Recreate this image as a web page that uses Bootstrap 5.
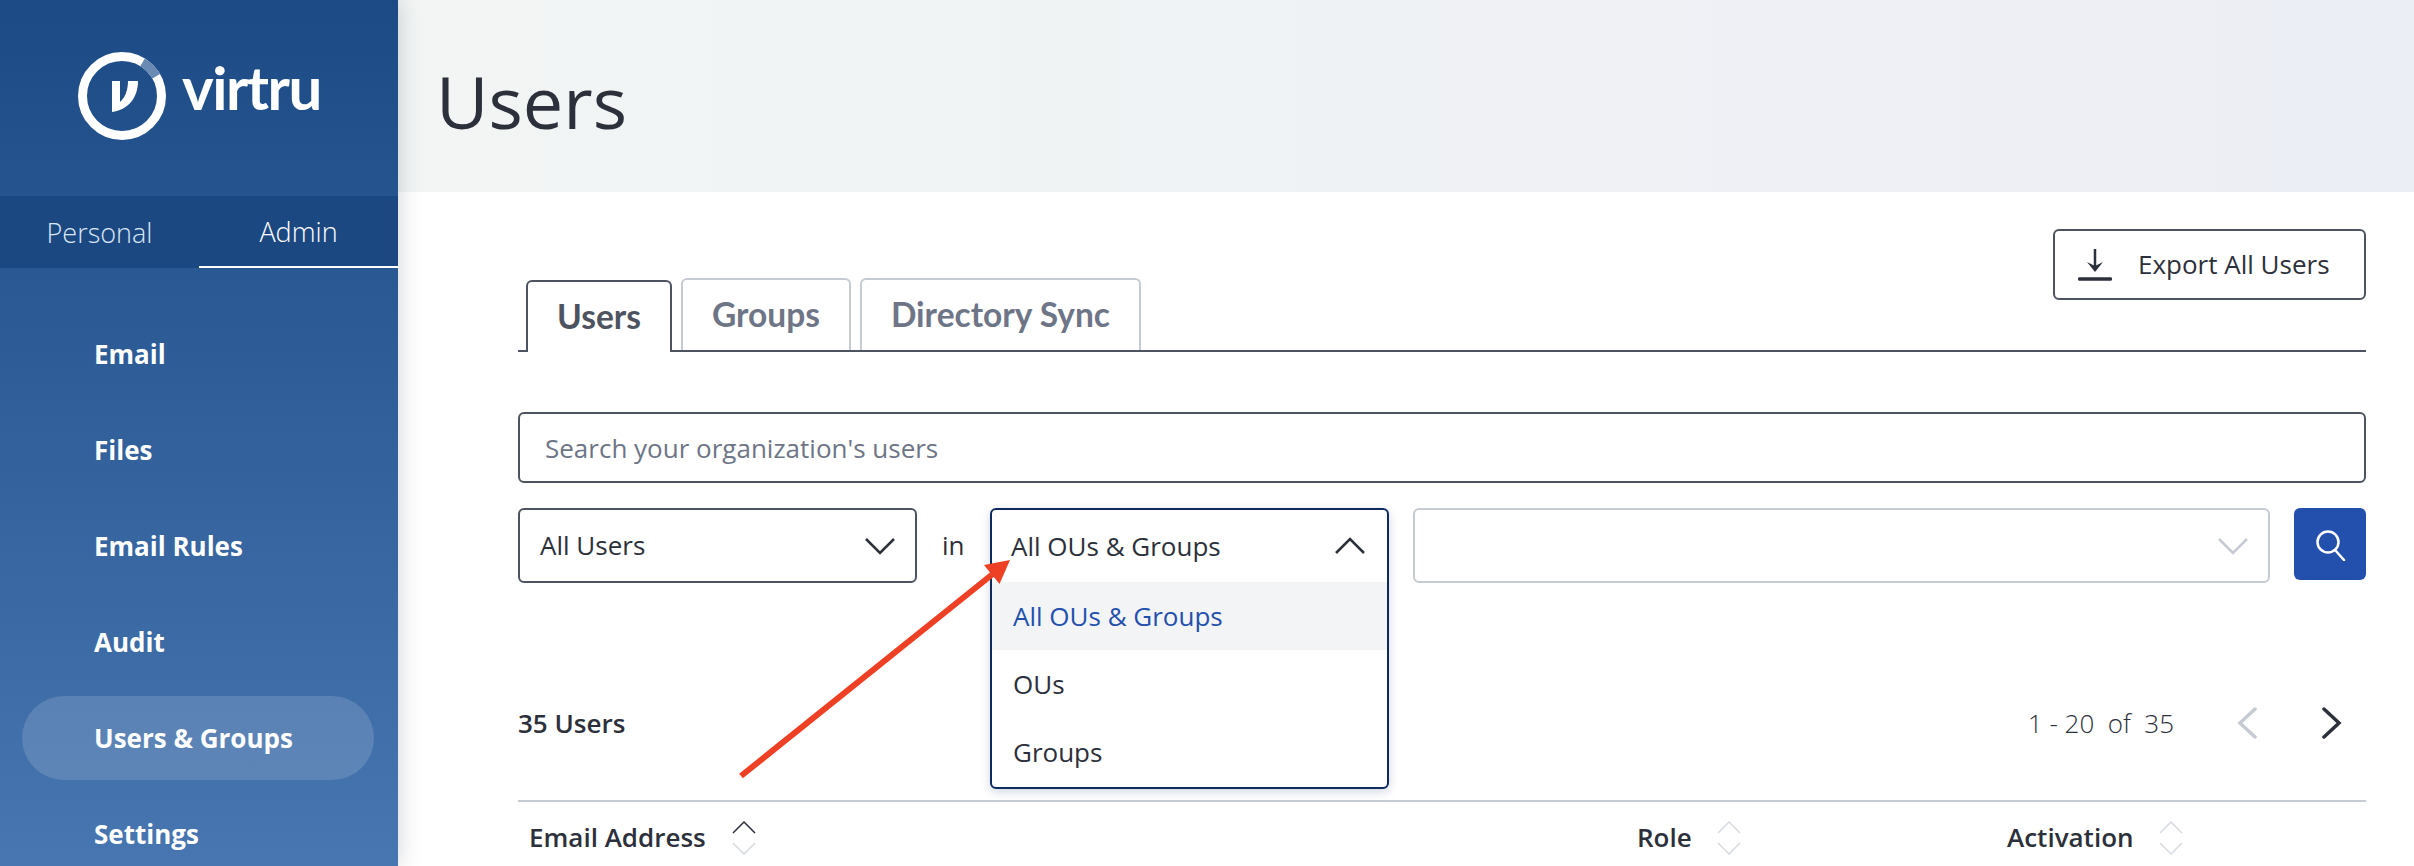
<!DOCTYPE html>
<html lang="en">
<head>
<meta charset="utf-8">
<title>Virtru - Users</title>
<link rel="stylesheet" href="https://cdn.jsdelivr.net/npm/bootstrap@5.3.0/dist/css/bootstrap.min.css">
<style>
html,body{height:866px;overflow:hidden}
body{font-family:"Open Sans","Liberation Sans",sans-serif;font-size:26px;color:#2c303b;background:#fff}
.side-panel{width:398px;height:866px;flex:none;background:linear-gradient(180deg,#1b4a84 0,#4876b0 100%);box-shadow:0 0 22px rgba(40,50,70,.22);position:relative;z-index:2}
.side-panel>*{flex:none}
.brand-area{height:196px;padding:52px 0 0 78px}
.brand-word{font-family:Lato,sans-serif;font-weight:700;font-size:60px;line-height:60px;letter-spacing:-1.5px;color:#fff;margin-left:12px;margin-top:5px}
.mode-switch{height:72px;background:#1c4882}
.mode-switch a{flex:1 1 0;display:flex;align-items:center;justify-content:center;font-weight:300;font-size:27px;color:#dbe6f5;text-decoration:none;height:72px;padding-top:2px}
.mode-switch a.on{color:#fff;border-bottom:2px solid #fff}
.side-links{padding:44px 24px 0 22px;gap:12px}
.side-links a{height:84px;flex:none;display:flex;align-items:center;padding-left:72px;color:#fff;font-weight:700;text-decoration:none;border-radius:42px}
.side-links a.on{background:rgba(255,255,255,.14)}
.page-head{height:192px;background:linear-gradient(90deg,#f2f5f4 0,#eceef5 100%);padding-left:38px;display:flex;align-items:center}
.page-head h1{font-size:72px;font-weight:400;margin:10px 0 0;line-height:1;color:#2c303b}
.page-body{padding:37px 48px 0 120px}
.tab-strip{height:123px;border-bottom:2px solid #4d5360;padding-left:8px;gap:9px;align-items:flex-end;flex-wrap:nowrap}
.tab-strip .nav-link{font-family:Lato,sans-serif;font-weight:700;font-size:33.5px;height:72px;padding:0 29px 1px;display:flex;align-items:center;color:#6d7587;border:2px solid #c5cad3;border-bottom:0;border-radius:6px 6px 0 0;margin-bottom:0;background:#fff}
.tab-strip .nav-link.active{color:#4d5360;border-color:#4d5360;position:relative;top:2px;margin-top:-2px}
.export-btn{align-self:flex-start;width:313px;height:71px;border:2px solid #4d5360;border-radius:6px;background:#fff;font-size:26px;color:#2c303b;display:flex;align-items:center;gap:26px;padding:0 0 0 23px}
.search-box.form-control{margin-top:60px;height:71px;border:2px solid #4d5360;border-radius:6px;font-size:26px;padding:0 25px;color:#2c303b}
.search-box::placeholder{color:#6d7587}
.filter-row{margin-top:25px;height:75px}
.pick-box{height:75px;border:2px solid #4d5360;border-radius:6px;display:flex;align-items:center;justify-content:space-between;padding:0 19px 0 20px;background:#fff}
.pick-users{width:399px;flex:none}
.in-word{width:73px;flex:none;padding-left:25px}
.pick-slot{width:399px;flex:none;position:relative;height:75px}
.pick-open{position:absolute;top:0;left:0;width:399px;height:281px;z-index:3;background:#fff;border:2px solid #0e2a5e;border-radius:6px;box-shadow:0 3px 10px rgba(20,50,110,.2);overflow:hidden}
.pick-open .head-line{height:72px;display:flex;align-items:center;justify-content:space-between;padding:0 21px 0 19px}
.pick-open .dropdown-item{height:68px;display:flex;align-items:center;padding:0 21px;font-size:26px;color:#2c303b}
.pick-open .dropdown-item.active{background:#f3f4f6;color:#2450ad}
.pick-empty{margin-left:24px;flex:1 1 auto;border-color:#c5cad3}
.go-btn{width:72px;height:72px;flex:none;margin-left:24px;background:#2450ad;border:0;border-radius:6px;padding:0;display:flex;align-items:center;justify-content:center}
.count-row{margin-top:105px;height:70px;margin-bottom:42px}
.count-label{font-weight:600}
.range-label{font-weight:300;margin-right:63px}
.pager{gap:65px}
.user-table{table-layout:fixed;width:1848px;margin:0;border-top:2px solid #c5cad3}
.user-table th{font-weight:600;font-size:26px;color:#2c303b;border:0;padding:19px 11px 15px;line-height:32px;vertical-align:middle;background:transparent}
.user-table .c-one{width:1108px}
.user-table .c-two{width:370px}
.sort-mark{margin-left:19px;margin-top:-4px;vertical-align:middle}
.mark-layer{position:absolute;top:0;left:0;pointer-events:none;z-index:5}
</style>
</head>
<body>
<div class="d-flex">
  <aside class="side-panel d-flex flex-column">
    <div class="brand-area d-flex align-items-start">
      <svg width="92" height="92" viewBox="0 0 92 92" aria-label="Virtru logo">
        <circle cx="44" cy="44" r="39.5" fill="none" stroke="#fff" stroke-width="9"/>
        <path d="M64.5 10.3A39.5 39.5 0 0 1 78.2 24.2" fill="none" stroke="#6a8ab4" stroke-width="9"/>
        <path d="M34 29H42V50C47 46 50 38 50 29H60C60 46 50 58 34 60Z" fill="#fff"/>
      </svg>
      <span class="brand-word">virtru</span>
    </div>
    <nav class="mode-switch d-flex">
      <a href="#">Personal</a>
      <a href="#" class="on">Admin</a>
    </nav>
    <nav class="side-links d-flex flex-column">
      <a href="#">Email</a>
      <a href="#">Files</a>
      <a href="#">Email Rules</a>
      <a href="#">Audit</a>
      <a href="#" class="on">Users &amp; Groups</a>
      <a href="#">Settings</a>
    </nav>
  </aside>
  <main class="flex-grow-1">
    <header class="page-head"><h1>Users</h1></header>
    <div class="page-body">
      <ul class="nav nav-tabs tab-strip">
        <li class="nav-item"><a class="nav-link active" href="#">Users</a></li>
        <li class="nav-item"><a class="nav-link" href="#">Groups</a></li>
        <li class="nav-item"><a class="nav-link" href="#">Directory Sync</a></li>
        <li class="ms-auto align-self-start">
          <button class="export-btn" type="button">
            <svg width="34" height="34" viewBox="0 0 34 34"><path d="M17 1V18" stroke="#2c303b" stroke-width="2.500"/><path d="M9 14L17 24L25 14L17 18Z" fill="#2c303b"/><path d="M1.500 31H32.500" stroke="#2c303b" stroke-width="3.500" stroke-linecap="round"/></svg>
            Export All Users
          </button>
        </li>
      </ul>
      <input class="form-control search-box" type="text" placeholder="Search your organization's users">
      <div class="filter-row d-flex align-items-start">
        <div class="pick-box pick-users">
          <span>All Users</span>
          <svg width="32" height="18" viewBox="0 0 32 18"><path d="M2 2L16 16L30 2" fill="none" stroke="#2c303b" stroke-width="2.500"/></svg>
        </div>
        <div class="in-word d-flex align-items-center h-100">in</div>
        <div class="pick-slot">
          <div class="pick-open">
            <div class="head-line">
              <span>All OUs &amp; Groups</span>
              <svg width="32" height="18" viewBox="0 0 32 18"><path d="M2 16L16 2L30 16" fill="none" stroke="#2c303b" stroke-width="2.500"/></svg>
            </div>
            <a class="dropdown-item active" href="#">All OUs &amp; Groups</a>
            <a class="dropdown-item" href="#">OUs</a>
            <a class="dropdown-item" href="#">Groups</a>
          </div>
        </div>
        <div class="pick-box pick-empty">
          <span></span>
          <svg width="32" height="18" viewBox="0 0 32 18"><path d="M2 2L16 16L30 2" fill="none" stroke="#c5cad3" stroke-width="2.500"/></svg>
        </div>
        <button class="go-btn" type="button" aria-label="Search">
          <svg width="32" height="34" viewBox="0 0 32 34"><circle cx="14" cy="15" r="10.500" fill="none" stroke="#fff" stroke-width="2.500"/><path d="M21 23L30 33" stroke="#fff" stroke-width="2.500" stroke-linecap="round"/></svg>
        </button>
      </div>
      <div class="count-row d-flex align-items-center justify-content-between">
        <span class="count-label">35 Users</span>
        <div class="d-flex align-items-center">
          <span class="range-label">1 - 20 &nbsp;of &nbsp;35</span>
          <div class="pager d-flex align-items-center me-4">
            <svg width="20" height="32" viewBox="0 0 20 32"><path d="M18 2L3 16L18 30" fill="none" stroke="#c5cad3" stroke-width="3.500" stroke-linecap="round"/></svg>
            <svg width="20" height="32" viewBox="0 0 20 32"><path d="M2 2L17 16L2 30" fill="none" stroke="#2c303b" stroke-width="3.500" stroke-linecap="round"/></svg>
          </div>
        </div>
      </div>
      <table class="table user-table">
        <thead>
          <tr>
            <th class="c-one">Email Address
              <svg class="sort-mark" width="24" height="34" viewBox="0 0 24 34"><path d="M1 12L12 1L23 12" fill="none" stroke="#2c303b" stroke-width="1.500"/><path d="M1 22L12 33L23 22" fill="none" stroke="#d5d9e0" stroke-width="1.500"/></svg>
            </th>
            <th class="c-two">Role
              <svg class="sort-mark" width="24" height="34" viewBox="0 0 24 34"><path d="M1 12L12 1L23 12" fill="none" stroke="#d5d9e0" stroke-width="1.500"/><path d="M1 22L12 33L23 22" fill="none" stroke="#d5d9e0" stroke-width="1.500"/></svg>
            </th>
            <th>Activation
              <svg class="sort-mark" width="24" height="34" viewBox="0 0 24 34"><path d="M1 12L12 1L23 12" fill="none" stroke="#d5d9e0" stroke-width="1.500"/><path d="M1 22L12 33L23 22" fill="none" stroke="#d5d9e0" stroke-width="1.500"/></svg>
            </th>
          </tr>
        </thead>
      </table>
    </div>
  </main>
</div>
<svg class="mark-layer" width="2414" height="866" viewBox="0 0 2414 866">
  <path d="M741 776L994 573" stroke="#ee4024" stroke-width="6"/>
  <path d="M1010 560L984 565L999.500 584Z" fill="#ee4024"/>
</svg>
</body>
</html>
